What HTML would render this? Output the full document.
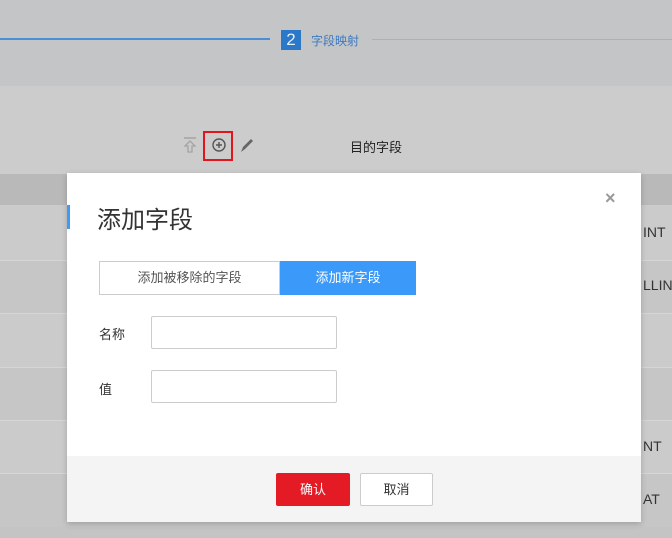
<!DOCTYPE html>
<html><head><meta charset="utf-8"><style>
*{margin:0;padding:0;box-sizing:border-box}
body{width:672px;height:538px;overflow:hidden;position:relative;background:#c9c9c9;font-family:"Liberation Sans","Noto Sans CJK SC",sans-serif}
.a{position:absolute}
</style></head><body>
<div class="a" style="left:0;top:0;width:672px;height:86px;background:#c4c5c7"></div>
<div class="a" style="left:0;top:38px;width:270px;height:2px;background:#4a8fd6"></div>
<div class="a" style="left:372px;top:39px;width:300px;height:1px;background:#aeb0b3"></div>
<div class="a" style="left:281px;top:30px;width:20px;height:20px;background:#2b78c9;color:#e8eef6;font-size:17px;text-align:center;line-height:20px">2</div>
<div class="a" style="left:311px;top:32px;font-size:12px;color:#3d7ac0">字段映射</div>
<div class="a" style="left:0;top:86px;width:672px;height:88px;background:#cccccc"></div>
<svg class="a" style="left:180px;top:135px" width="80" height="22">
<line x1="4" y1="3" x2="16" y2="3" stroke="#a4a4a4" stroke-width="1.5"/>
<path d="M10 6 L5 11 H8 V17 H12 V11 H15 Z" fill="none" stroke="#a4a4a4" stroke-width="1.3"/>
<circle cx="39" cy="10" r="6" fill="none" stroke="#555" stroke-width="1.4"/>
<path d="M39 7v6M36 10h6" stroke="#555" stroke-width="1.4"/>
<path d="M61 17l2-5 8-8 2 2-8 8z" fill="#666"/>
</svg>
<div class="a" style="left:203px;top:131px;width:30px;height:30px;border:2px solid #e4141e"></div>
<div class="a" style="left:350px;top:137px;font-size:13px;color:#222">目的字段</div>
<div class="a" style="left:0;top:174px;width:672px;height:31px;background:#b9b9b9"></div>
<div class="a" style="left:0;top:205px;width:672px;height:55px;background:#cbcbcb"></div>
<div class="a" style="left:0;top:260px;width:672px;height:53px;background:#c6c6c6;border-top:1px solid #d6d6d6"></div>
<div class="a" style="left:0;top:313px;width:672px;height:54px;background:#cbcbcb;border-top:1px solid #d6d6d6"></div>
<div class="a" style="left:0;top:367px;width:672px;height:53px;background:#c6c6c6;border-top:1px solid #d6d6d6"></div>
<div class="a" style="left:0;top:420px;width:672px;height:53px;background:#cbcbcb;border-top:1px solid #d6d6d6"></div>
<div class="a" style="left:0;top:473px;width:672px;height:54px;background:#c6c6c6;border-top:1px solid #d6d6d6"></div>
<div class="a" style="left:0;top:527px;width:672px;height:11px;background:#c4c4c4"></div>
<div class="a" style="left:643px;top:224px;font-size:14px;color:#333">INT</div>
<div class="a" style="left:643px;top:277px;font-size:14px;color:#333">LLIN</div>
<div class="a" style="left:643px;top:438px;font-size:14px;color:#333">NT</div>
<div class="a" style="left:643px;top:491px;font-size:14px;color:#333">AT</div>
<div class="a" style="left:67px;top:173px;width:574px;height:349px;background:#fff;box-shadow:0 2px 6px rgba(0,0,0,.2)"></div>
<div class="a" style="left:67px;top:456px;width:574px;height:66px;background:#f4f4f4"></div>
<div class="a" style="left:67px;top:205px;width:3px;height:24px;background:#3d9af5"></div>
<div class="a" style="left:97px;top:200px;font-size:24px;color:#333">添加字段</div>
<div class="a" style="left:605px;top:188px;font-size:18px;color:#999;font-weight:bold">×</div>
<div class="a" style="left:99px;top:261px;width:181px;height:34px;border:1px solid #ccc;font-size:13px;color:#555;text-align:center;line-height:32px">添加被移除的字段</div>
<div class="a" style="left:280px;top:261px;width:136px;height:34px;background:#3b9af9;font-size:13px;color:#fff;text-align:center;line-height:34px">添加新字段</div>
<div class="a" style="left:99px;top:324px;font-size:13px;color:#333">名称</div>
<div class="a" style="left:151px;top:316px;width:186px;height:33px;border:1px solid #ccc;border-radius:2px"></div>
<div class="a" style="left:99px;top:379px;font-size:13px;color:#333">值</div>
<div class="a" style="left:151px;top:370px;width:186px;height:33px;border:1px solid #ccc;border-radius:2px"></div>
<div class="a" style="left:276px;top:473px;width:74px;height:33px;background:#e41a25;border-radius:2px;color:#fff;font-size:13px;text-align:center;line-height:33px">确认</div>
<div class="a" style="left:360px;top:473px;width:73px;height:33px;background:#fff;border:1px solid #ccc;border-radius:2px;color:#333;font-size:13px;text-align:center;line-height:31px">取消</div>
</body></html>
